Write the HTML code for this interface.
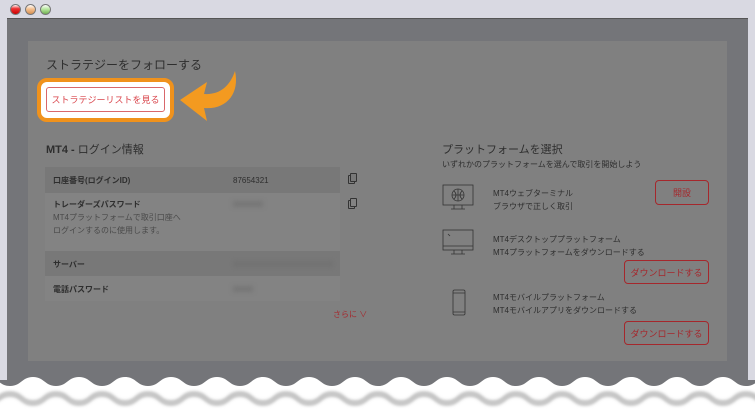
<!DOCTYPE html>
<html><head><meta charset="utf-8"><style>
*{margin:0;padding:0;box-sizing:border-box}
body{width:755px;height:410px;overflow:hidden;background:#fff;font-family:"Liberation Sans","Noto Sans CJK JP",sans-serif;position:relative}
.abs{position:absolute}
.t{color:#2e2e2e}
.row{position:absolute;left:45px;width:295px}
.btn{position:absolute;border:1px solid #a5272c;border-radius:4px;color:#a5272c;font-size:9px;display:flex;align-items:center;justify-content:center}
</style></head><body>
<div class="abs" style="left:0;top:0;width:755px;height:400px;background:#d9d9e2"></div>
<div class="abs" style="left:7px;top:18px;width:741px;height:380px;background:#747579;border-top:1px solid #555"></div>
<div class="abs" style="left:0;top:380px;width:755px;height:20px;background:#747579"></div>
<div class="abs" style="left:28px;top:41px;width:699px;height:320px;background:#808080"></div>
<div class="abs" style="left:10px;top:4px;width:11px;height:11px;border-radius:50%;background:linear-gradient(#fff 0,#e33 40%,#c00);border:1px solid #777"></div>
<div class="abs" style="left:25px;top:4px;width:11px;height:11px;border-radius:50%;background:linear-gradient(#fff 0,#f4c090 45%,#d89050);border:1px solid #777"></div>
<div class="abs" style="left:40px;top:4px;width:11px;height:11px;border-radius:50%;background:linear-gradient(#fff 0,#b8e8a0 45%,#70b050);border:1px solid #777"></div>

<div class="abs t" style="left:46px;top:56px;font-size:12px">ストラテジーをフォローする</div>
<div class="abs" style="left:37px;top:78px;width:137px;height:44px;border:4px solid #f0921c;border-radius:10px;background:#fff"></div>
<div class="abs" style="left:46px;top:87px;width:119px;height:25px;border:1px solid #d9676b;border-radius:3px;color:#d9434a;font-size:9px;display:flex;align-items:center;justify-content:center">ストラテジーリストを見る</div>
<svg class="abs" style="left:176px;top:68px" width="64" height="56" viewBox="0 0 64 56">
<path d="M59 3 C64 26 50 42 28 40 L31 53 L4 32 L31 14 L28 26 C44 27 54 18 59 3Z" fill="#f39a20"/>
</svg>

<div class="abs t" style="left:46px;top:141px;font-size:11px"><b>MT4 -</b> ログイン情報</div>
<div class="row" style="top:167px;height:26px;background:#787878"></div>
<div class="row" style="top:193px;height:58px;background:#838383"></div>
<div class="row" style="top:251px;height:25px;background:#787878"></div>
<div class="row" style="top:276px;height:25px;background:#838383"></div>
<div class="abs t" style="left:53px;top:175px;font-size:8px;font-weight:bold">口座番号(ログインID)</div>
<div class="abs t" style="left:233px;top:176px;font-size:8px">87654321</div>
<div class="abs t" style="left:53px;top:199px;font-size:8px;font-weight:bold">トレーダーズパスワード</div>
<div class="abs" style="left:53px;top:211px;font-size:8px;color:#4a4a4a;line-height:13px">MT4プラットフォームで取引口座へ<br>ログインするのに使用します。</div>
<div class="abs" style="left:233px;top:201px;width:30px;height:6px;background:#767676;filter:blur(2px)"></div>
<div class="abs t" style="left:53px;top:259px;font-size:8px;font-weight:bold">サーバー</div>
<div class="abs" style="left:233px;top:261px;width:100px;height:6px;background:#727272;filter:blur(2px)"></div>
<div class="abs t" style="left:53px;top:284px;font-size:8px;font-weight:bold">電話パスワード</div>
<div class="abs" style="left:233px;top:286px;width:20px;height:6px;background:#767676;filter:blur(2px)"></div>
<div class="abs" style="left:348px;top:175px;width:7px;height:9px;border:1px solid #333;border-radius:1px"></div>
<div class="abs" style="left:350px;top:173px;width:7px;height:9px;border:1px solid #333;border-radius:1px;background:#787878"></div>
<div class="abs" style="left:348px;top:200px;width:7px;height:9px;border:1px solid #333;border-radius:1px"></div>
<div class="abs" style="left:350px;top:198px;width:7px;height:9px;border:1px solid #333;border-radius:1px;background:#838383"></div>
<div class="abs" style="left:333px;top:309px;font-size:8px;color:#a5272c">さらに ∨</div>

<div class="abs t" style="left:442px;top:141px;font-size:11px">プラットフォームを選択</div>
<div class="abs t" style="left:442px;top:159px;font-size:8px">いずれかのプラットフォームを選んで取引を開始しよう</div>
<svg class="abs" style="left:442px;top:184px" width="36" height="84" viewBox="0 0 36 84" fill="none" stroke="#333" stroke-width="0.8">
<rect x="1" y="1" width="30" height="20"/><circle cx="16" cy="11" r="6"/><path d="M10 11h12M16 5v12M12 7q4 4 0 8M20 7q-4 4 0 8M12 21v4M20 21v4M9 25h14"/>
<rect x="1" y="46" width="30" height="20"/><path d="M1 62h30M12 66v4M20 66v4M9 70h14M6 50l2 2"/>
</svg>
<svg class="abs" style="left:452px;top:289px" width="16" height="30" viewBox="0 0 16 30" fill="none" stroke="#333" stroke-width="0.8"><rect x="1" y="1" width="12" height="25" rx="1.5"/><path d="M1 4h12M1 23h12"/></svg>
<div class="abs t" style="left:493px;top:187px;font-size:8px;line-height:13px">MT4ウェブターミナル<br>ブラウザで正しく取引</div>
<div class="abs t" style="left:493px;top:233px;font-size:8px;line-height:13px">MT4デスクトッププラットフォーム<br>MT4プラットフォームをダウンロードする</div>
<div class="abs t" style="left:493px;top:291px;font-size:8px;line-height:13px">MT4モバイルプラットフォーム<br>MT4モバイルアプリをダウンロードする</div>
<div class="btn" style="left:655px;top:180px;width:54px;height:25px">開設</div>
<div class="btn" style="left:624px;top:260px;width:85px;height:24px">ダウンロードする</div>
<div class="btn" style="left:624px;top:321px;width:85px;height:24px">ダウンロードする</div>

<svg class="abs" style="left:0;top:0" width="755" height="410" viewBox="0 0 755 410">
<defs><filter id="s" x="-5%" y="-50%" width="110%" height="200%"><feGaussianBlur stdDeviation="1.5"/></filter></defs>
<path d="M-13 377 c11.5 0 11.5 9 23 9 c11.5 0 11.5 -9 23 -9 c11.5 0 11.5 9 23 9 c11.5 0 11.5 -9 23 -9 c11.5 0 11.5 9 23 9 c11.5 0 11.5 -9 23 -9 c11.5 0 11.5 9 23 9 c11.5 0 11.5 -9 23 -9 c11.5 0 11.5 9 23 9 c11.5 0 11.5 -9 23 -9 c11.5 0 11.5 9 23 9 c11.5 0 11.5 -9 23 -9 c11.5 0 11.5 9 23 9 c11.5 0 11.5 -9 23 -9 c11.5 0 11.5 9 23 9 c11.5 0 11.5 -9 23 -9 c11.5 0 11.5 9 23 9 c11.5 0 11.5 -9 23 -9 c11.5 0 11.5 9 23 9 c11.5 0 11.5 -9 23 -9 c11.5 0 11.5 9 23 9 c11.5 0 11.5 -9 23 -9 c11.5 0 11.5 9 23 9 c11.5 0 11.5 -9 23 -9 c11.5 0 11.5 9 23 9 c11.5 0 11.5 -9 23 -9 c11.5 0 11.5 9 23 9 c11.5 0 11.5 -9 23 -9 c11.5 0 11.5 9 23 9 c11.5 0 11.5 -9 23 -9 c11.5 0 11.5 9 23 9 c11.5 0 11.5 -9 23 -9 c11.5 0 11.5 9 23 9 c11.5 0 11.5 -9 23 -9 L800 410 L-13 410Z" fill="#fff"/>
<g fill="none" stroke-width="2">
<path id="w2" d="M-13 402 c11.5 0 11.5 -9 23 -9 c11.5 0 11.5 9 23 9 c11.5 0 11.5 -9 23 -9 c11.5 0 11.5 9 23 9 c11.5 0 11.5 -9 23 -9 c11.5 0 11.5 9 23 9 c11.5 0 11.5 -9 23 -9 c11.5 0 11.5 9 23 9 c11.5 0 11.5 -9 23 -9 c11.5 0 11.5 9 23 9 c11.5 0 11.5 -9 23 -9 c11.5 0 11.5 9 23 9 c11.5 0 11.5 -9 23 -9 c11.5 0 11.5 9 23 9 c11.5 0 11.5 -9 23 -9 c11.5 0 11.5 9 23 9 c11.5 0 11.5 -9 23 -9 c11.5 0 11.5 9 23 9 c11.5 0 11.5 -9 23 -9 c11.5 0 11.5 9 23 9 c11.5 0 11.5 -9 23 -9 c11.5 0 11.5 9 23 9 c11.5 0 11.5 -9 23 -9 c11.5 0 11.5 9 23 9 c11.5 0 11.5 -9 23 -9 c11.5 0 11.5 9 23 9 c11.5 0 11.5 -9 23 -9 c11.5 0 11.5 9 23 9 c11.5 0 11.5 -9 23 -9 c11.5 0 11.5 9 23 9 c11.5 0 11.5 -9 23 -9 c11.5 0 11.5 9 23 9 c11.5 0 11.5 -9 23 -9 c11.5 0 11.5 9 23 9" stroke="#bbb" stroke-width="3" filter="url(#s)" transform="translate(0,2)"/>
<use href="#w2" stroke="#6e6e72" stroke-width="2" filter="none" transform="translate(0,-2)"/>
</g>
</svg>
</body></html>
